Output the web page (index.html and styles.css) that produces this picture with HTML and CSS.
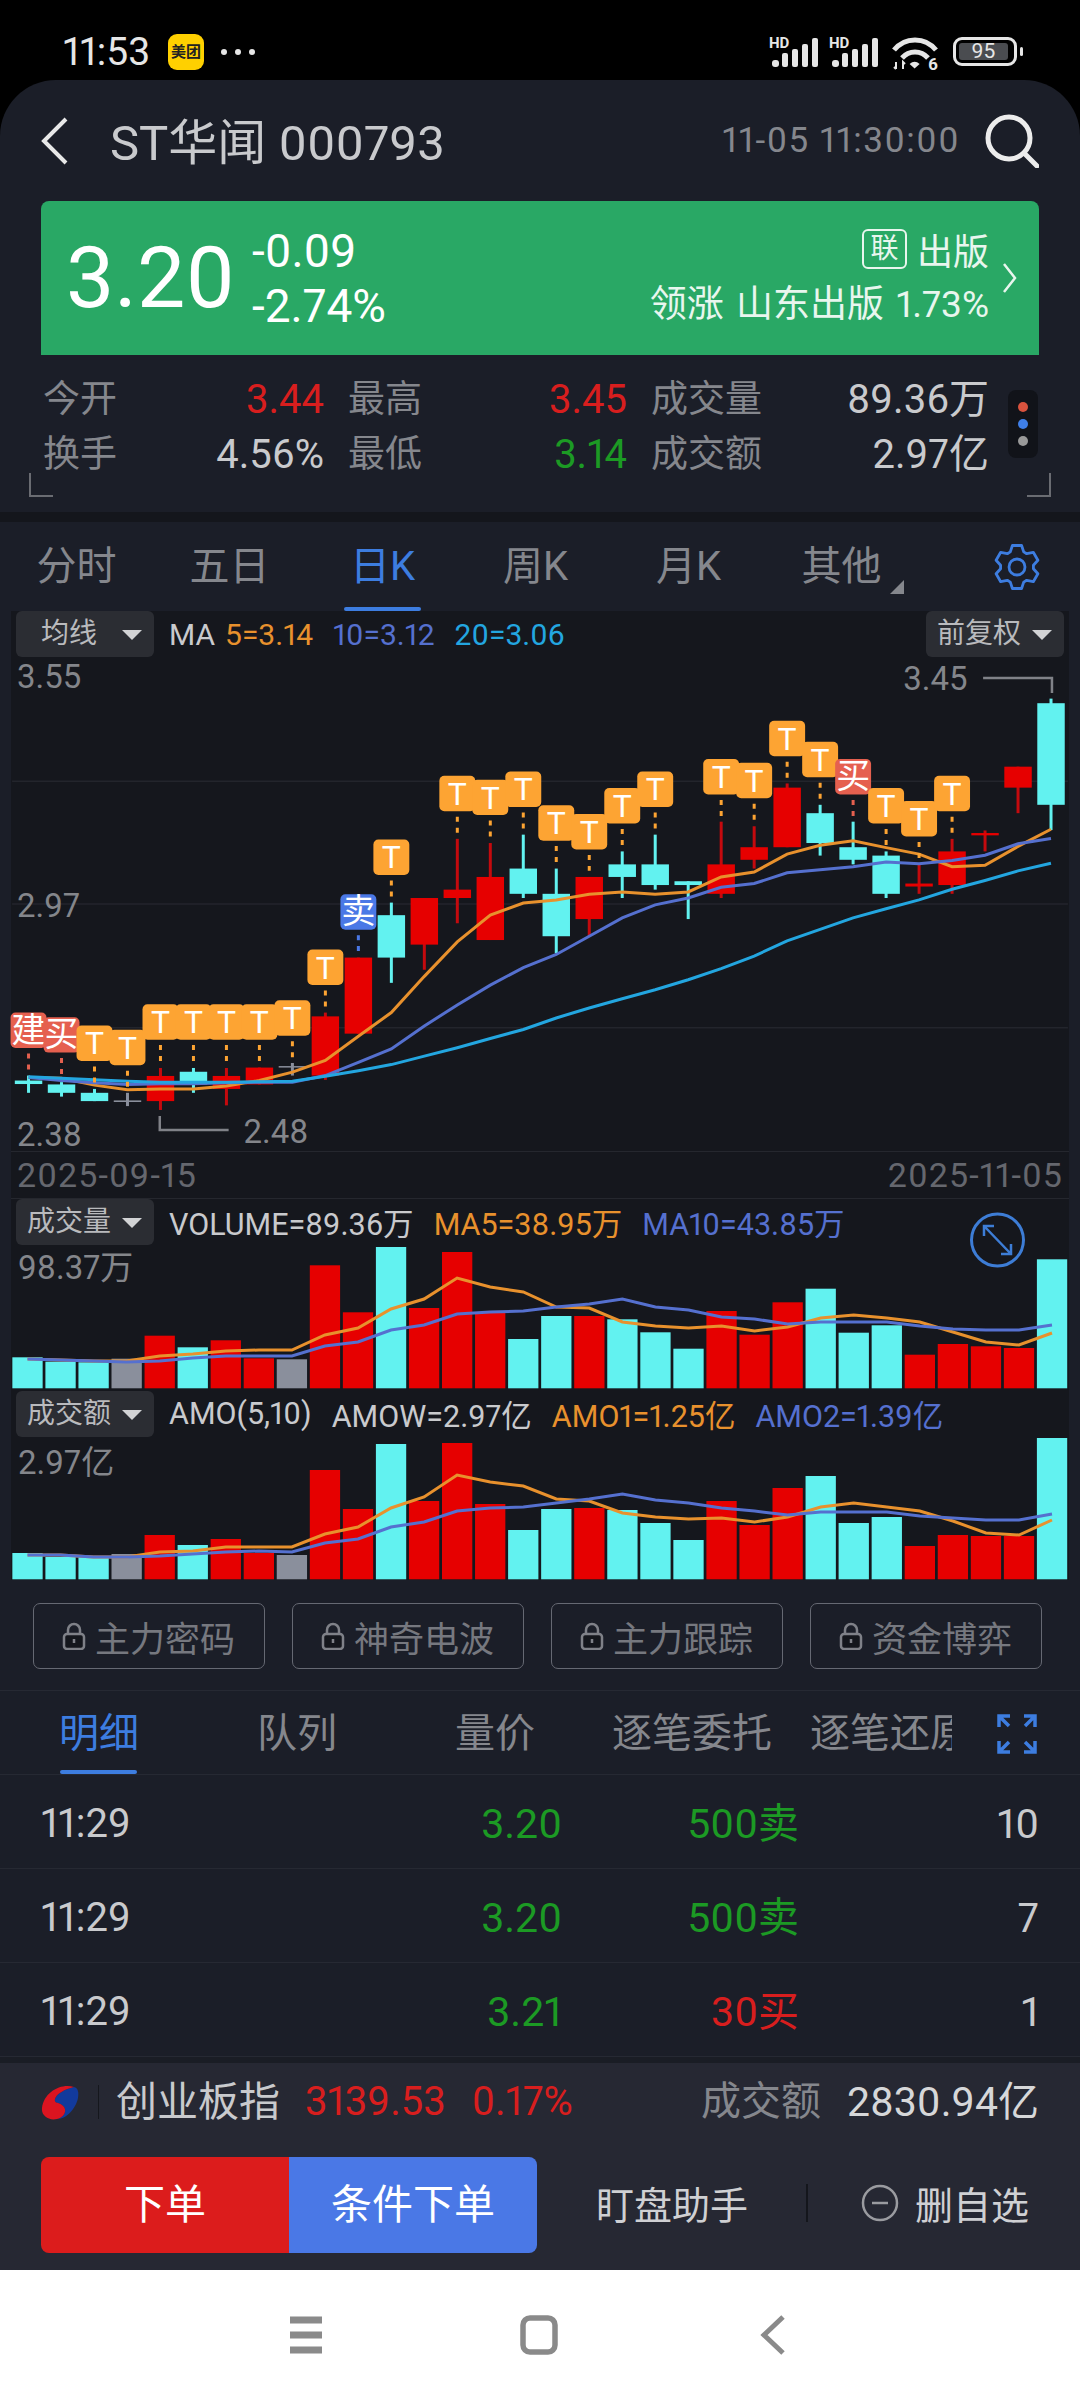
FILE: index.html
```html
<!DOCTYPE html>
<html lang="zh-CN">
<head>
  <meta charset="UTF-8">
  <meta name="viewport" content="width=device-width, initial-scale=1.0">
  <title>ST华闻 000793</title>
  <link rel="stylesheet" href="styles.css">
</head>
<body>
  <!-- Status bar -->
  <div class="status-bar">
    <div class="status-left">
      <span class="clock">11:53</span>
      <span class="meituan">美团</span>
      <span class="more-dots"><i></i><i></i><i></i></span>
    </div>
    <div class="status-right">
      <svg class="signal" viewBox="0 0 50 31">
        <text class="hd" x="0" y="11">HD</text>
        <rect x="3" y="23" width="7" height="7" rx="3" /><rect x="13" y="16" width="6" height="14" rx="2" /><rect x="23" y="12" width="6" height="18" rx="2" /><rect x="33" y="7" width="6" height="23" rx="2" /><rect x="43" y="1" width="6" height="29" rx="2" />
      </svg>
      <svg class="signal" viewBox="0 0 50 31">
        <text class="hd" x="0" y="11">HD</text>
        <rect x="3" y="23" width="7" height="7" rx="3" /><rect x="13" y="16" width="6" height="14" rx="2" /><rect x="23" y="12" width="6" height="18" rx="2" /><rect x="33" y="7" width="6" height="23" rx="2" /><rect x="43" y="1" width="6" height="29" rx="2" />
      </svg>
      <svg class="wifi" viewBox="0 0 47 33">
        <path d="M2 13 C13 -0.500 33 -0.500 44 13 M10 21 C17 13 29 13 36 21" />
        <path class="wifi-dot" d="M17.600 27 Q22.600 22.500 27.600 27 L22.600 31.500 Z" />
        <path class="wifi-arrows" d="M4 25 V32 M2 30 L4 32 M11 32 V25 L13 27" />
        <text class="wifi-six" x="36" y="33">6</text>
      </svg>
      <div class="battery"><span>95</span></div>
    </div>
  </div>

  <div class="app">
    <!-- Stock title -->
    <header class="top-bar">
      <svg class="back" viewBox="0 0 28 48"><path d="M25 2 L3 24 L25 46" /></svg>
      <h1 class="stock-name">ST华闻 000793</h1>
      <span class="stamp">11-05 11:30:00</span>
      <svg class="search" viewBox="0 0 54 54"><circle cx="24" cy="24" r="21" /><path d="M40 40 L52 52" /></svg>
    </header>

    <!-- Price banner -->
    <section class="price-banner">
      <div class="last-price">3.20</div>
      <div class="change">
        <span>-0.09</span>
        <span>-2.74%</span>
      </div>
      <div class="sector">
        <div class="sector-name"><b>联</b>出版</div>
        <div class="sector-lead">领涨 山东出版 1.73%</div>
      </div>
      <svg class="banner-arrow" viewBox="0 0 15 30"><path d="M2 1 L13 15 L2 29" /></svg>
    </section>

    <!-- Quote stats -->
    <section class="stats">
      <div class="stat"><span>今开</span><em class="up">3.44</em></div>
      <div class="stat"><span>最高</span><em class="up">3.45</em></div>
      <div class="stat"><span>成交量</span><em>89.36万</em></div>
      <div class="stat"><span>换手</span><em>4.56%</em></div>
      <div class="stat"><span>最低</span><em class="down">3.14</em></div>
      <div class="stat"><span>成交额</span><em>2.97亿</em></div>
      <div class="page-dots"><i class="dot-red"></i><i class="dot-blue"></i><i class="dot-grey"></i></div>
      <i class="corner corner-left"></i>
      <i class="corner corner-right"></i>
    </section>
    <div class="band"></div>

    <!-- Period tabs -->
    <nav class="period-tabs">
      <a>分时</a><a>五日</a><a class="active">日K</a><a>周K</a><a>月K</a><a class="has-more">其他</a>
      <svg class="gear" viewBox="0 0 48 48"><polygon points="17.3,8.9 19.4,2.5 28.6,2.500 30.7,8.9 33.7,10.7 40.3,9.300 44.9,17.200 40.4,22.300 40.4,25.700 44.9,30.800 40.3,38.700 33.7,37.300 30.7,39.100 28.6,45.500 19.4,45.500 17.3,39.100 14.3,37.300 7.700,38.700 3.100,30.800 7.600,25.700 7.600,22.300 3.100,17.200 7.700,9.300 14.300,10.700" /><circle cx="24" cy="24" r="8" /></svg>
    </nav>

    <!-- Charts -->
    <section class="charts">
      <div class="chart-head">
        <span class="pill pill-ma">均线</span>
        <span class="legend legend-tight">MA</span>
        <span class="legend legend-close c-orange">5=3.14</span>
        <span class="legend c-blue">10=3.12</span>
        <span class="legend c-sky">20=3.06</span>
        <span class="pill pill-right">前复权</span>
      </div>
      <svg class="plot price-plot" id="price-plot" viewBox="11 657 1058 495">
        <path class="grid" d="M11 781.500 H1069 M11 904.500 H1069 M11 1028.500 H1069" />
        <text class="axis" x="16" y="688">3.55</text>
        <text class="axis" x="16" y="918">2.97</text>
        <text class="axis" x="16" y="1147">2.38</text>
        <path class="bracket" d="M159 1117 V1131 H228" />
        <text class="axis" x="243" y="1144">2.48</text>
        <text class="axis" x="904" y="690">3.45</text>
        <path class="bracket" d="M984 678 H1053 V693" />
      </svg>
      <div class="date-row"><span>2025-09-15</span><span>2025-11-05</span></div>

      <div class="chart-head head-lined">
        <span class="pill">成交量</span>
        <span class="legend legend-wide">VOLUME=89.36万</span>
        <span class="legend legend-wide c-orange">MA5=38.95万</span>
        <span class="legend legend-wide c-blue">MA10=43.85万</span>
      </div>
      <svg class="plot vol-plot" id="vol-plot" viewBox="11 1245 1058 145">
        <circle class="expand" cx="997.500" cy="1240" r="26" />
      </svg>

      <div class="chart-head head-amo">
        <span class="pill">成交额</span>
        <span class="legend legend-wide">AMO(5,10)</span>
        <span class="legend legend-wide">AMOW=2.97亿</span>
        <span class="legend legend-wide c-orange">AMO1=1.25亿</span>
        <span class="legend legend-wide c-blue">AMO2=1.39亿</span>
      </div>
      <svg class="plot amo-plot" id="amo-plot" viewBox="11 1437 1058 143"></svg>
    </section>

    <!-- Locked tools -->
    <section class="tools">
      <a><svg class="lock" viewBox="0 0 24 28"><path d="M6 13 V8 a6 6 0 0 1 12 0 V13" /><rect x="2" y="12" width="20" height="15" rx="3" /><path d="M12 17 V21" /></svg>主力密码</a>
      <a><svg class="lock" viewBox="0 0 24 28"><path d="M6 13 V8 a6 6 0 0 1 12 0 V13" /><rect x="2" y="12" width="20" height="15" rx="3" /><path d="M12 17 V21" /></svg>神奇电波</a>
      <a><svg class="lock" viewBox="0 0 24 28"><path d="M6 13 V8 a6 6 0 0 1 12 0 V13" /><rect x="2" y="12" width="20" height="15" rx="3" /><path d="M12 17 V21" /></svg>主力跟踪</a>
      <a><svg class="lock" viewBox="0 0 24 28"><path d="M6 13 V8 a6 6 0 0 1 12 0 V13" /><rect x="2" y="12" width="20" height="15" rx="3" /><path d="M12 17 V21" /></svg>资金博弈</a>
    </section>

    <!-- Trade detail -->
    <nav class="detail-tabs">
      <div class="detail-scroll">
        <a class="active">明细</a><a>队列</a><a>量价</a><a>逐笔委托</a><a>逐笔还原</a>
      </div>
      <svg class="fullscreen" viewBox="0 0 40 40"><path d="M2 13 V2 H13 M3 3 L12 12 M27 2 H38 V13 M37 3 L28 12 M2 27 V38 H13 M3 37 L12 28 M27 38 H38 V27 M37 37 L28 28" /></svg>
    </nav>
    <div class="ticks">
      <div class="tick"><span>11:29</span><span class="down">3.20</span><span class="down">500卖</span><span>10</span></div>
      <div class="tick"><span>11:29</span><span class="down">3.20</span><span class="down">500卖</span><span>7</span></div>
      <div class="tick"><span>11:29</span><span class="down">3.21</span><span class="up">30买</span><span>1</span></div>
    </div>
    <div class="strip"></div>

    <!-- Bottom actions -->
    <footer class="bottom">
      <div class="index-row">
        <svg class="index-logo" viewBox="0 0 38 36">
          <path class="logo-blue" d="M33 3 C24 5 15 10 14 15 C13 20 17 18 21 21 C27 25 24 33 16 35 C26 35 35 24 37 14 C38 8 37 4 33 3 Z" />
          <path class="logo-red" d="M33 3 C20 -1 3 8 1 24 C0 32 8 37 16 35 C24 33 27 25 21 21 C17 18 13 20 14 15 C15 10 24 5 33 3 Z" />
        </svg>
        <i class="index-sep"></i>
        <span class="index-name">创业板指</span>
        <span class="up index-value">3139.53</span>
        <span class="up index-rate">0.17%</span>
        <span class="index-label">成交额</span>
        <span class="index-amount">2830.94亿</span>
      </div>
      <div class="action-row">
        <div class="order-btns"><a class="btn-red">下单</a><a class="btn-blue">条件下单</a></div>
        <a class="watch">盯盘助手</a>
        <i class="action-sep"></i>
        <a class="remove">
          <svg class="minus" viewBox="0 0 38 38"><circle cx="19" cy="19" r="17" /><path d="M11 19 H27" /></svg>
          删自选
        </a>
      </div>
    </footer>
  </div>

  <!-- System navigation -->
  <div class="sys-nav">
    <svg class="sys-menu" viewBox="0 0 38 38"><path d="M3 4 H35 M3 19 H35 M3 34 H35" /></svg>
    <svg class="sys-home" viewBox="0 0 38 40"><rect x="3" y="3" width="32" height="34" rx="7" /></svg>
    <svg class="sys-back" viewBox="0 0 26 40"><path d="M23 2 L4 20 L23 38" /></svg>
  </div>

  <script src="chart.js"></script>
</body>
</html>
```

FILE: styles.css
```css
* {
  box-sizing: border-box;
}
html, body {
  margin: 0;
  padding: 0;
}
body {
  width: 1080px;
  height: 2400px;
  overflow: hidden;
  background-color: #000;
  color: #c9cacd;
  font-family: Roboto, "Noto Sans CJK SC", sans-serif;
  font-variant-numeric: proportional-nums;
}
a {
  display: block;
}
i {
  display: block;
}
em {
  font-style: normal;
}
.up {
  color: #d81e1e;
}
.down {
  color: #1c9a24;
}

/* Status bar */
.status-bar {
  height: 80px;
  padding: 34px 63px 0 63px;
  display: flex;
  justify-content: space-between;
  align-items: flex-start;
  color: #e6e6e6;
}
.status-left {
  display: flex;
  align-items: center;
  height: 36px;
}
.clock {
  font-size: 39px;
  width: 105px;
}
.meituan {
  width: 36px;
  height: 36px;
  border-radius: 9px;
  background-color: #ffd000;
  color: #222;
  font-size: 15px;
  font-weight: 700;
  line-height: 36px;
  text-align: center;
  white-space: nowrap;
}
.more-dots {
  display: flex;
  gap: 8px;
  margin-left: 17px;
}
.more-dots i {
  width: 6px;
  height: 6px;
  border-radius: 50%;
  background-color: #e6e6e6;
}
.status-right {
  display: flex;
  align-items: flex-start;
  padding-top: 3px;
}
.signal {
  width: 50px;
  height: 31px;
  margin-right: 10px;
  fill: #e6e6e6;
  overflow: visible;
}
.hd {
  font-size: 15px;
  font-weight: 700;
}
.wifi {
  width: 47px;
  height: 33px;
  margin: 0 14px 0 3px;
  fill: #e6e6e6;
  overflow: visible;
}
.wifi path {
  fill: none;
  stroke: #e6e6e6;
  stroke-width: 5;
}
.wifi .wifi-dot {
  fill: #e6e6e6;
  stroke: none;
}
.wifi .wifi-arrows {
  stroke-width: 2;
}
.wifi-six {
  font-size: 17px;
  font-weight: 700;
}
.battery {
  position: relative;
  width: 64px;
  height: 29px;
  border: 3px solid #e6e6e6;
  border-radius: 9px;
  padding: 3px;
}
.battery::after {
  content: "";
  position: absolute;
  right: -9px;
  top: 7px;
  width: 3px;
  height: 9px;
  border-radius: 2px;
  background-color: #e6e6e6;
}
.battery span {
  display: block;
  width: 49px;
  height: 100%;
  border-radius: 3px;
  background-color: #4a4c50;
  color: #e6e6e6;
  font-size: 21px;
  line-height: 17px;
  text-align: center;
}

/* App card */
.app {
  background-color: #1b1e28;
  border-radius: 56px 56px 0 0;
  height: 2190px;
  overflow: hidden;
}
.top-bar {
  height: 121px;
  position: relative;
  display: flex;
  align-items: center;
  padding: 0 41px;
}
.back {
  width: 28px;
  height: 48px;
  fill: none;
  stroke: #e8e8e8;
  stroke-width: 4;
}
.stock-name {
  margin: -5px 0 0 41px;
  font-size: 49px;
  font-weight: 400;
  color: #c9cacd;
  white-space: nowrap;
}
.stamp {
  margin-left: auto;
  margin-right: 25px;
  font-size: 35px;
  letter-spacing: 1.500px;
  color: #85878d;
}
.search {
  width: 54px;
  height: 54px;
  fill: none;
  stroke: #ececec;
  stroke-width: 5;
  stroke-linecap: round;
}

/* Price banner */
.price-banner {
  height: 154px;
  margin: 0 41px;
  padding: 0 22px 0 25px;
  display: flex;
  align-items: center;
  border-radius: 8px 8px 0 0;
  background-color: #29a865;
  color: #fff;
}
.last-price {
  font-size: 86px;
  width: 186px;
  margin-top: -2px;
}
.change {
  display: flex;
  flex-direction: column;
  gap: 9px;
  font-size: 46px;
  line-height: 46px;
}
.sector {
  margin-left: auto;
  text-align: right;
  color: #e8f6ee;
}
.sector-name {
  display: flex;
  justify-content: flex-end;
  align-items: center;
  gap: 10px;
  height: 42px;
  font-size: 36px;
}
.sector-name b {
  width: 45px;
  height: 40px;
  border: 2px solid #e8f6ee;
  border-radius: 6px;
  font-size: 28px;
  font-weight: 400;
  line-height: 35px;
  text-align: center;
}
.sector-lead {
  margin-top: 12px;
  font-size: 37px;
  line-height: 46px;
  word-spacing: 3px;
}
.banner-arrow {
  width: 15px;
  height: 30px;
  margin-left: 13px;
  fill: none;
  stroke: #e8f6ee;
  stroke-width: 2.500;
}

/* Quote stats */
.stats {
  position: relative;
  height: 157px;
  padding: 17px 91px 0 43px;
  display: grid;
  grid-template-columns: 281px 279px 1fr;
  grid-auto-rows: 55.500px;
  column-gap: 24px;
  font-size: 37px;
  line-height: 46px;
}
.stat {
  display: flex;
  justify-content: space-between;
  align-items: center;
}
.stat span {
  color: #85878d;
}
.stat em {
  color: #c9cacd;
  font-size: 40px;
}
.stat em.up {
  color: #d81e1e;
}
.stat em.down {
  color: #1c9a24;
}
.page-dots {
  position: absolute;
  left: 1008px;
  top: 35px;
  width: 30px;
  height: 68px;
  border-radius: 8px;
  background-color: #111319;
  display: flex;
  flex-direction: column;
  align-items: center;
  justify-content: center;
  gap: 7px;
}
.page-dots i {
  width: 10px;
  height: 10px;
  border-radius: 50%;
}
.dot-red {
  background-color: #d9533e;
}
.dot-blue {
  background-color: #3f7fe8;
}
.dot-grey {
  background-color: #999;
}
.corner {
  position: absolute;
  top: 118px;
  width: 24px;
  height: 24px;
  border-bottom: 2px solid #6a6c72;
}
.corner-left {
  left: 29px;
  border-left: 2px solid #6a6c72;
}
.corner-right {
  left: 1027px;
  border-right: 2px solid #6a6c72;
}
.band {
  height: 10px;
  background-color: #14161c;
}

/* Period tabs */
.period-tabs {
  height: 89px;
  display: flex;
  align-items: stretch;
  position: relative;
  font-size: 40px;
  color: #85878d;
}
.period-tabs a {
  flex: 0 0 153px;
  text-align: center;
  line-height: 90px;
  position: relative;
}
.period-tabs a.active {
  color: #3d7de0;
}
.period-tabs a.active::after {
  content: "";
  position: absolute;
  left: 38px;
  right: 38px;
  bottom: 0;
  height: 4px;
  border-radius: 2px;
  background-color: #3d7de0;
}
.period-tabs a.has-more::after {
  content: "";
  position: absolute;
  right: 14px;
  bottom: 17px;
  border-left: 14px solid transparent;
  border-bottom: 14px solid #85878d;
}
.gear {
  position: absolute;
  left: 993px;
  top: 21px;
  width: 48px;
  height: 48px;
  fill: none;
  stroke: #3d7de0;
  stroke-width: 2.800;
  stroke-linejoin: round;
}

/* Charts */
.charts {
  margin: 0 11px;
  background-color: #15171d;
  height: 969px;
}
.chart-head {
  height: 46px;
  display: flex;
  align-items: center;
  position: relative;
  padding-left: 5px;
  font-size: 30px;
}
.head-lined {
  height: 47px;
  border-top: 1px solid #25272e;
}
.head-amo {
  height: 47px;
}
.pill {
  width: 138px;
  height: 46px;
  padding-left: 11px;
  position: relative;
  flex: none;
  border-radius: 6px;
  background-color: #2b2d33;
  color: #b9babd;
  font-size: 28px;
  line-height: 46px;
}
.pill::after {
  content: "";
  position: absolute;
  right: 12px;
  top: 19px;
  border-left: 10px solid transparent;
  border-right: 10px solid transparent;
  border-top: 10px solid #d2d3d5;
}
.pill-ma {
  padding-left: 25px;
}
.pill-right {
  position: absolute;
  right: 5px;
  top: 0;
}
.legend {
  margin-left: 20px;
  color: #c9cacd;
  white-space: nowrap;
}
.legend-wide {
  font-size: 30.500px;
}
.pill + .legend {
  margin-left: 15px;
}
.legend.legend-close {
  margin-left: 10px;
}
.legend.c-orange {
  color: #e8912d;
}
.legend.c-blue {
  color: #5570cf;
}
.legend.c-sky {
  color: #23a6e0;
}
.plot {
  display: block;
  width: 1058px;
  overflow: visible;
}
.price-plot {
  height: 495px;
  border-bottom: 1px solid #25272e;
}
.vol-plot {
  height: 145px;
}
.amo-plot {
  height: 143px;
}
.grid {
  fill: none;
  stroke: #23252c;
  stroke-width: 1.500;
}
.axis {
  font-size: 33px;
  fill: #84868b;
}
.bracket {
  fill: none;
  stroke: #808288;
  stroke-width: 2.500;
}
.expand {
  fill: none;
  stroke: #3d7dd6;
  stroke-width: 3;
}
.expand-arrow {
  fill: none;
  stroke: #3d7dd6;
  stroke-width: 2.500;
}
.ma-line {
  fill: none;
  stroke-width: 3;
}
.line-5 {
  stroke: #e8912d;
}
.line-10 {
  stroke: #5570cf;
}
.line-20 {
  stroke: #23a6e0;
}
.badge-text {
  font-size: 32px;
  fill: #fff;
  text-anchor: middle;
}
.date-row {
  height: 46px;
  padding: 0 6px;
  display: flex;
  justify-content: space-between;
  align-items: center;
  font-size: 34px;
  letter-spacing: 1.100px;
  color: #65676e;
}

/* Locked tools */
.tools {
  height: 111px;
  padding: 23px 39px 0 33px;
  display: flex;
  gap: 27.500px;
  border-bottom: 1px solid #262933;
}
.tools a {
  flex: 0 0 231.500px;
  height: 66px;
  border: 1.500px solid #666973;
  border-radius: 7px;
  display: flex;
  align-items: center;
  padding-left: 28px;
  gap: 9px;
  font-size: 35px;
  color: #76787f;
  white-space: nowrap;
}
.lock {
  flex: none;
  width: 24px;
  height: 28px;
  fill: #14161c;
  stroke: #7f8188;
  stroke-width: 2.500;
}
.lock path:first-child {
  fill: none;
}

/* Trade detail */
.detail-tabs {
  height: 84px;
  position: relative;
  border-bottom: 1px solid #262933;
  font-size: 40px;
  color: #85878d;
}
.detail-scroll {
  width: 952px;
  height: 100%;
  overflow: hidden;
  display: flex;
}
.detail-scroll a {
  flex: 0 0 198px;
  text-align: center;
  line-height: 85px;
  white-space: nowrap;
  position: relative;
}
.detail-scroll a.active {
  color: #3d7de0;
}
.detail-scroll a.active::after {
  content: "";
  position: absolute;
  left: 60px;
  width: 77px;
  bottom: 0;
  height: 4px;
  border-radius: 2px;
  background-color: #3d7de0;
}
.detail-scroll a:nth-child(4), .detail-scroll a:nth-child(5) {
  text-align: left;
  padding-left: 18px;
}
.fullscreen {
  position: absolute;
  left: 997px;
  top: 23px;
  width: 40px;
  height: 40px;
  fill: none;
  stroke: #3d7de0;
  stroke-width: 3.500;
}
.tick {
  height: 94px;
  padding: 5px 41px 0 41px;
  display: grid;
  grid-template-columns: 100px 421px 237px 1fr;
  align-items: center;
  border-bottom: 1px solid #262933;
  font-size: 41px;
  line-height: 48px;
  color: #c9cacd;
}
.tick span:first-child {
  font-size: 40px;
}
.tick span:nth-child(n+2) {
  text-align: right;
}
.strip {
  height: 6px;
  background-color: #1a1d25;
}

/* Bottom actions */
.bottom {
  height: 207px;
  background-color: #262833;
  padding: 0 41px;
}
.index-row {
  height: 78px;
  display: flex;
  align-items: center;
  font-size: 40px;
  line-height: 48px;
}
.index-logo {
  width: 38px;
  height: 36px;
  flex: none;
}
.logo-red {
  fill: #dc1420;
}
.logo-blue {
  fill: #123a9c;
}
.index-sep {
  width: 1px;
  height: 34px;
  margin: 0 17px 0 19px;
  background-color: #15171d;
}
.index-name {
  width: 189px;
  color: #c9cacd;
  font-size: 41px;
}
.index-rate {
  margin-left: 26px;
}
.index-label {
  margin-left: auto;
  margin-right: 26px;
  color: #85878d;
}
.index-amount {
  color: #d6d7d9;
  font-size: 41px;
}
.action-row {
  margin-top: 16px;
  display: flex;
  align-items: center;
  font-size: 38px;
  color: #cfd0d3;
}
.order-btns {
  display: flex;
  width: 496px;
  height: 96px;
  border-radius: 8px;
  overflow: hidden;
  color: #fff;
  font-size: 41px;
  line-height: 96px;
  text-align: center;
}
.btn-red {
  flex: 1;
  background-color: #dc1c1c;
}
.btn-blue {
  flex: 1;
  background-color: #4a78e6;
}
.watch {
  margin: -5px 0 0 59px;
  white-space: nowrap;
}
.action-sep {
  width: 2px;
  height: 38px;
  margin: -4px 0 0 58px;
  background-color: #14161c;
}
.remove {
  margin: -5px 0 0 53px;
  display: flex;
  align-items: center;
  gap: 16px;
  white-space: nowrap;
}
.minus {
  width: 38px;
  height: 38px;
  fill: none;
  stroke: #9a9ba0;
  stroke-width: 2.500;
}

/* System navigation */
.sys-nav {
  height: 130px;
  background-color: #fff;
  position: relative;
}
.sys-nav svg {
  position: absolute;
  fill: none;
  stroke: #8a8a8a;
}
.sys-menu {
  left: 287px;
  top: 46px;
  width: 38px;
  height: 38px;
  stroke-width: 7;
}
.sys-home {
  left: 520px;
  top: 45px;
  width: 38px;
  height: 40px;
  stroke-width: 5.500;
}
.sys-back {
  left: 760px;
  top: 45px;
  width: 26px;
  height: 40px;
  stroke-width: 5;
}
```

FILE: chart.js
```js
// kind, wick top, wick bottom, body top, body bottom (page y, px)
const candles = [
  ["c", 1076.4, 1093.7, 1081.4, 1084.9], ["c", 1083, 1097.5, 1085.3, 1093.7],
  ["c", 1089.8, 1102, 1093.7, 1102], ["g", 1093.7, 1107, 1101.3, 1102.9],
  ["r", 1068.8, 1110.9, 1076.8, 1102], ["c", 1068.8, 1093.7, 1072.6, 1085.3],
  ["r", 1068.8, 1106.3, 1076.8, 1089.8], ["r", 1068.4, 1085.3, 1068.4, 1085.3],
  ["g", 1063.8, 1076.4, 1066.9, 1068.4], ["r", 1013.3, 1080.7, 1017.1, 1076.4],
  ["r", 958.2, 1034.4, 958.2, 1034.4], ["c", 903.1, 983.5, 915.7, 958.2],
  ["r", 898.5, 970.4, 898.5, 945.2], ["r", 839.2, 923.8, 890.1, 898.5],
  ["r", 843.4, 940.6, 877.4, 940.6], ["c", 835, 898.5, 869, 894.3],
  ["c", 869, 953.6, 894.3, 936.8], ["r", 877.4, 936.8, 877.4, 919.6],
  ["c", 851.8, 898.5, 864.8, 877.4], ["c", 835, 890.1, 864.8, 885.5],
  ["c", 881.7, 919.6, 881.7, 885.5], ["r", 822, 898.5, 864.8, 894.3],
  ["r", 826.6, 869, 847.6, 860.2], ["r", 783.7, 847.6, 787.9, 847.6],
  ["c", 805.1, 856, 813.5, 843.4], ["c", 822, 864.8, 847.6, 860.2],
  ["c", 851.8, 898.5, 856, 894.3], ["r", 864.8, 894.3, 884, 887],
  ["r", 839.2, 894.3, 851.8, 885.5], ["r", 830.8, 851.8, 833.4, 835.7],
  ["r", 766.9, 813.5, 766.9, 787.9], ["c", 698.7, 830.4, 703.3, 805.1]
];

const priceLines = {
  "line-5": [1078.4, 1079.1, 1086, 1090.6, 1089.8, 1089.8, 1086.8, 1081.4, 1073, 1061.2, 1037, 1013.3, 977, 942.5, 915.7, 903.5, 900.4, 894.7, 892.4, 894.7, 892.4, 877.4, 872.5, 854.5, 845.7, 841.1, 848, 854.5, 867.1, 865.6, 846.8, 829.6],
  "line-10": [1078.4, 1081.4, 1083.7, 1085.3, 1084.5, 1084.5, 1083.7, 1083, 1083, 1076.4, 1063.1, 1049.7, 1026.7, 1005.7, 985.8, 968.2, 955.1, 936.8, 918.4, 905.4, 898.5, 887.8, 884, 873.2, 870.2, 867.1, 862.5, 864.1, 861, 855.6, 844.2, 838.8],
  "line-20": [1077.6, 1079.1, 1080.7, 1082.2, 1083, 1083, 1083, 1082.6, 1082.2, 1077.2, 1071.5, 1065.4, 1056.9, 1048.5, 1039.3, 1030.2, 1018.7, 1008.7, 999.5, 990.4, 980.4, 969.3, 956.7, 941.4, 929.9, 918.4, 909.2, 900.4, 889.7, 880.9, 871.3, 863.7]
};

// candle index, top of the badge, label
const badges = [
  [0, 1013.3, "建"], [1, 1017.9, "买"], [2, 1026.3, "T"], [3, 1030.5, "T"], [4, 1004.9, "T"],
  [5, 1004.9, "T"], [6, 1004.9, "T"], [7, 1004.9, "T"], [8, 1001, "T"], [9, 950.2, "T"],
  [10, 894.7, "卖"], [11, 839.9, "T"], [13, 776, "T"], [14, 779.9, "T"], [15, 771.8, "T"],
  [16, 805.5, "T"], [17, 814.3, "T"], [18, 788.3, "T"], [19, 771.8, "T"], [21, 759.2, "T"],
  [22, 763, "T"], [23, 720.9, "T"], [24, 742, "T"], [25, 759.2, "买"], [26, 788.3, "T"],
  [27, 801.3, "T"], [28, 776, "T"]
];

const volBars = [1357.3, 1361.7, 1362.3, 1358.7, 1335.7, 1347.3, 1340.3, 1358.3, 1359.3, 1265.3, 1312.3, 1247, 1308, 1252, 1312.3, 1339, 1316, 1316, 1319.3, 1332.3, 1348.7, 1311, 1334.7, 1302.3, 1288.7, 1332.7, 1325.3, 1354.7, 1344, 1346.3, 1348, 1259.3];
const volLines = {
  "line-5": [1359, 1360, 1361, 1361, 1356, 1354, 1351, 1350, 1350, 1335, 1328, 1309, 1299, 1278, 1287, 1292, 1307, 1308, 1322, 1326, 1328, 1326, 1331, 1327, 1318, 1315, 1318, 1322, 1332, 1342, 1345, 1333],
  "line-10": [1359, 1360, 1361, 1362, 1361, 1358, 1356, 1356, 1356, 1346, 1342, 1330, 1325, 1314, 1312, 1311, 1307, 1304, 1299, 1307, 1310, 1317, 1319, 1324, 1322, 1322, 1322, 1326, 1329, 1330, 1330, 1325]
};

const amoBars = [1553, 1557, 1557, 1554, 1535, 1545, 1539, 1553, 1555, 1470, 1509, 1444, 1501, 1443, 1504, 1530, 1509, 1508, 1510, 1523, 1540, 1501, 1525, 1488, 1476, 1523, 1517, 1546, 1535, 1536, 1536, 1438];
const amoLines = {
  "line-5": [1555, 1555, 1557, 1557, 1552, 1551, 1547, 1547, 1547, 1534, 1527, 1508, 1497, 1475, 1482, 1486, 1499, 1501, 1513, 1517, 1519, 1518, 1522, 1517, 1507, 1503, 1507, 1511, 1521, 1533, 1535, 1520],
  "line-10": [1555, 1555, 1557, 1557, 1556, 1554, 1552, 1551, 1552, 1543, 1539, 1527, 1522, 1511, 1508, 1507, 1503, 1499, 1494, 1500, 1503, 1508, 1511, 1515, 1512, 1512, 1512, 1516, 1518, 1520, 1520, 1514]
};

const bodyColors = { c: "#62f2f0", r: "#e60000", g: "#8a8f9c" };
const wickColors = { c: "#62f2f0", r: "#c40a0e", g: "#8a8f9c" };
const badgeColors = { T: "#fda433", "买": "#e5604f", "建": "#e5604f", "卖": "#4a78e6" };

function centerX(i) {
  return 27.5 + 33.05 * i;
}

function linePaths(lines) {
  return Object.keys(lines).map((name) => {
    const points = lines[name].map((y, i) => `${centerX(i).toFixed(1)},${y}`).join(" ");
    return `<polyline class="ma-line ${name}" points="${points}" />`;
  }).join("");
}

function drawCandles() {
  return candles.map(([kind, wickTop, wickBottom, bodyTop, bodyBottom], i) => {
    const x = centerX(i);
    return `<rect x="${x - 1.5}" y="${wickTop}" width="3" height="${wickBottom - wickTop}" fill="${wickColors[kind]}" />` +
      `<rect x="${x - 13.75}" y="${bodyTop}" width="27.5" height="${bodyBottom - bodyTop}" fill="${bodyColors[kind]}" />`;
  }).join("");
}

function drawBadges() {
  return badges.map(([i, top, label]) => {
    const x = centerX(i);
    const color = badgeColors[label];
    const size = label === "T" ? "" : ' style="font-size: 34px"';
    return `<path d="M${x} ${top + 41} v5 m0 6 v5" stroke="${color}" stroke-width="3" />` +
      `<rect x="${x - 18}" y="${top}" width="36" height="35.5" rx="5" fill="${color}" />` +
      `<text class="badge-text" x="${x}" y="${top + 29}"${size}>${label}</text>`;
  }).join("");
}

function drawBars(tops, baseline) {
  return tops.map((top, i) => {
    return `<rect x="${centerX(i) - 15.15}" y="${top}" width="30.3" height="${baseline - top}" fill="${bodyColors[candles[i][0]]}" />`;
  }).join("");
}

function axisLabel(x, y, text) {
  return `<text class="axis" x="${x}" y="${y}">${text}</text>`;
}

const expandArrows = '<path class="expand-arrow" d="M984 1226 L1011 1254 M984 1236 V1226 H994 M1011 1244 V1254 H1001" />';

document.getElementById("price-plot").insertAdjacentHTML("beforeend", drawCandles() + linePaths(priceLines) + drawBadges());
document.getElementById("vol-plot").insertAdjacentHTML("beforeend", drawBars(volBars, 1388.3) + linePaths(volLines) + axisLabel(18, 1279, "98.37万") + expandArrows);
document.getElementById("amo-plot").insertAdjacentHTML("beforeend", drawBars(amoBars, 1579.3) + linePaths(amoLines) + axisLabel(18, 1474, "2.97亿"));
```
